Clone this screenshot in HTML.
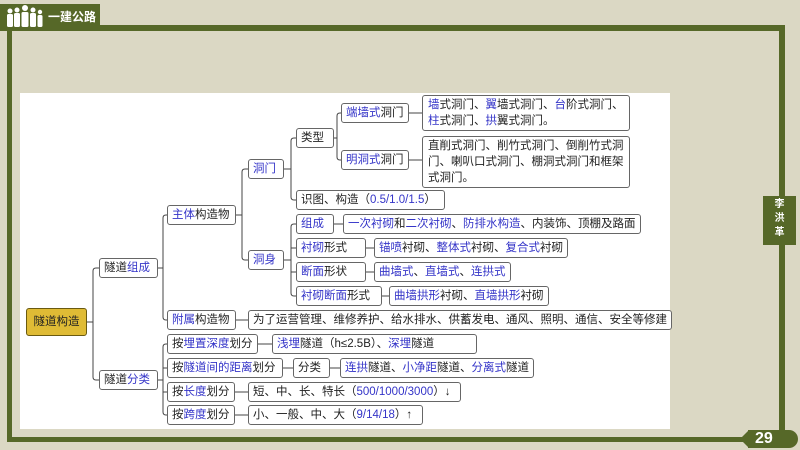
<!DOCTYPE html>
<html><head><meta charset="utf-8"><style>
*{margin:0;padding:0;box-sizing:border-box}
body{width:800px;height:450px;background:#dbd8c4;position:relative;overflow:hidden;font-family:"Liberation Sans","Noto Sans CJK SC",sans-serif}
.g{position:absolute;background:#566828}
.w{position:absolute;left:20px;top:93px;width:650px;height:336px;background:#fff}
.n{position:absolute;border:1px solid #666;border-radius:3px;background:#fff;font-size:11.5px;line-height:18px;padding:0 4px;color:#222;white-space:nowrap}
.n.m{white-space:normal;line-height:16px;padding:1px 5px}
b{font-weight:normal;color:#3434c8}
svg{position:absolute;left:0;top:0}
</style></head><body>
<div class="g" style="left:0;top:4px;width:100px;height:27px"></div>
<div class="g" style="left:100px;top:25px;width:685px;height:6px"></div>
<div class="g" style="left:7px;top:30px;width:5px;height:412px"></div>
<div class="g" style="left:779px;top:25px;width:6px;height:417px"></div>
<div class="g" style="left:7px;top:437px;width:740px;height:5px"></div>
<div class="g" style="left:763px;top:196px;width:33px;height:49px"></div>
<div style="position:absolute;left:763px;top:198px;width:33px;color:#fff;font-size:10px;line-height:14px;text-align:center;font-weight:bold">李<br>洪<br>革</div>
<div class="g" style="left:748px;top:430px;width:50px;height:18px;border-radius:0 9px 9px 0"></div>
<div style="position:absolute;left:740px;top:430px;width:0;height:0;border-top:9px solid transparent;border-bottom:9px solid transparent;border-right:9px solid #566828"></div>
<div style="position:absolute;left:755px;top:429px;color:#fff;font-weight:bold;font-size:16px;line-height:20px">29</div>
<svg width="40" height="30" style="left:4px;top:4px" fill="#fff">
<circle cx="6" cy="7" r="2.5"/><rect x="3" y="10" width="6" height="13" rx="1.5"/>
<circle cx="13" cy="6" r="2.5"/><rect x="10" y="9" width="6" height="14" rx="1.5"/>
<circle cx="21" cy="4" r="3"/><rect x="17.5" y="8" width="7" height="15" rx="1.5"/>
<circle cx="29" cy="6" r="2.5"/><rect x="26" y="9" width="6" height="14" rx="1.5"/>
<circle cx="36" cy="8" r="2.2"/><rect x="33.5" y="11" width="5" height="12" rx="1.5"/>
</svg>
<div style="position:absolute;left:48px;top:9px;color:#fff;font-weight:bold;font-size:12px;line-height:16px">一建公路</div>
<div class="w"></div>
<svg width="800" height="450" fill="none" stroke="#444" stroke-width="1">
<path d="M87,322H93M99,268H96Q93,268 93,271V377Q93,380 96,380H99"/>
<path d="M158,268H163M168,215H166Q163,215 163,218V317Q163,320 166,320H168"/>
<path d="M236,215H242M248,169H245Q242,169 242,172V257Q242,260 245,260H248"/>
<path d="M284,169H291M296,138H294Q291,138 291,141V197Q291,200 294,200H296"/>
<path d="M334,138H337M341,113H340Q337,113 337,116V157Q337,160 340,160H341"/>
<path d="M409,113H422M409,160H422"/>
<path d="M284,260H291M296,224H294Q291,224 291,227V293Q291,296 294,296H296M291,248H296M291,272H296"/>
<path d="M334,224H343M366,248H374M366,272H374M382,296H389M236,320H248"/>
<path d="M158,380H163M168,344H166Q163,344 163,347V412Q163,415 166,415H168M163,368H168M163,392H168"/>
<path d="M258,344H272M283,368H293M330,368H340M235,392H248M235,415H248"/>
</svg>
<div class="n" style="left:26px;top:308px;width:61px;height:28px;line-height:26px;background:#dfbb35;border-color:#6a5a10;text-align:center">隧道构造</div>
<div class="n" style="left:99px;top:258px;min-width:59px">隧道<b>组成</b></div>
<div class="n" style="left:99px;top:370px;min-width:59px">隧道<b>分类</b></div>
<div class="n" style="left:167px;top:205px;min-width:69px"><b>主体</b>构造物</div>
<div class="n" style="left:167px;top:310px;min-width:69px"><b>附属</b>构造物</div>
<div class="n" style="left:248px;top:159px;min-width:36px"><b>洞门</b></div>
<div class="n" style="left:248px;top:250px;min-width:36px"><b>洞身</b></div>
<div class="n" style="left:296px;top:128px;min-width:38px">类型</div>
<div class="n" style="left:296px;top:190px;min-width:149px">识图、构造（<b>0.5/1.0/1.5</b>）</div>
<div class="n" style="left:341px;top:103px;min-width:68px"><b>端墙式</b>洞门</div>
<div class="n" style="left:341px;top:150px;min-width:68px"><b>明洞式</b>洞门</div>
<div class="n m" style="left:422px;top:95px;width:208px"><b>墙</b>式洞门、<b>翼</b>墙式洞门、<b>台</b>阶式洞门、<b>柱</b>式洞门、<b>拱</b>翼式洞门。</div>
<div class="n m" style="left:422px;top:136px;width:208px">直削式洞门、削竹式洞门、倒削竹式洞门、喇叭口式洞门、棚洞式洞门和框架式洞门。</div>
<div class="n" style="left:296px;top:214px;min-width:38px"><b>组成</b></div>
<div class="n" style="left:343px;top:214px"><b>一次衬砌</b>和<b>二次衬砌</b>、<b>防排水构造</b>、内装饰、顶棚及路面</div>
<div class="n" style="left:296px;top:238px;min-width:70px"><b>衬砌</b>形式</div>
<div class="n" style="left:374px;top:238px;min-width:182px"><b>锚喷</b>衬砌、<b>整体式</b>衬砌、<b>复合式</b>衬砌</div>
<div class="n" style="left:296px;top:262px;min-width:70px"><b>断面</b>形状</div>
<div class="n" style="left:374px;top:262px;min-width:125px"><b>曲墙式</b>、<b>直墙式</b>、<b>连拱式</b></div>
<div class="n" style="left:296px;top:286px;min-width:86px"><b>衬砌断面</b>形式</div>
<div class="n" style="left:389px;top:286px;min-width:158px"><b>曲墙拱形</b>衬砌、<b>直墙拱形</b>衬砌</div>
<div class="n" style="left:248px;top:310px">为了运营管理、维修养护、给水排水、供蓄发电、通风、照明、通信、安全等修建</div>
<div class="n" style="left:167px;top:334px;min-width:91px">按<b>埋置深度</b>划分</div>
<div class="n" style="left:272px;top:334px;min-width:205px"><b>浅埋</b>隧道（h≤2.5B）、<b>深埋</b>隧道</div>
<div class="n" style="left:167px;top:358px;min-width:116px">按<b>隧道间的距离</b>划分</div>
<div class="n" style="left:293px;top:358px;min-width:37px">分类</div>
<div class="n" style="left:340px;top:358px;min-width:194px"><b>连拱</b>隧道、<b>小净距</b>隧道、<b>分离式</b>隧道</div>
<div class="n" style="left:167px;top:382px;min-width:68px">按<b>长度</b>划分</div>
<div class="n" style="left:248px;top:382px;min-width:213px">短、中、长、特长（<b>500/1000/3000</b>）↓</div>
<div class="n" style="left:167px;top:405px;min-width:68px">按<b>跨度</b>划分</div>
<div class="n" style="left:248px;top:405px;min-width:175px">小、一般、中、大（<b>9/14/18</b>）↑</div>
</body></html>
